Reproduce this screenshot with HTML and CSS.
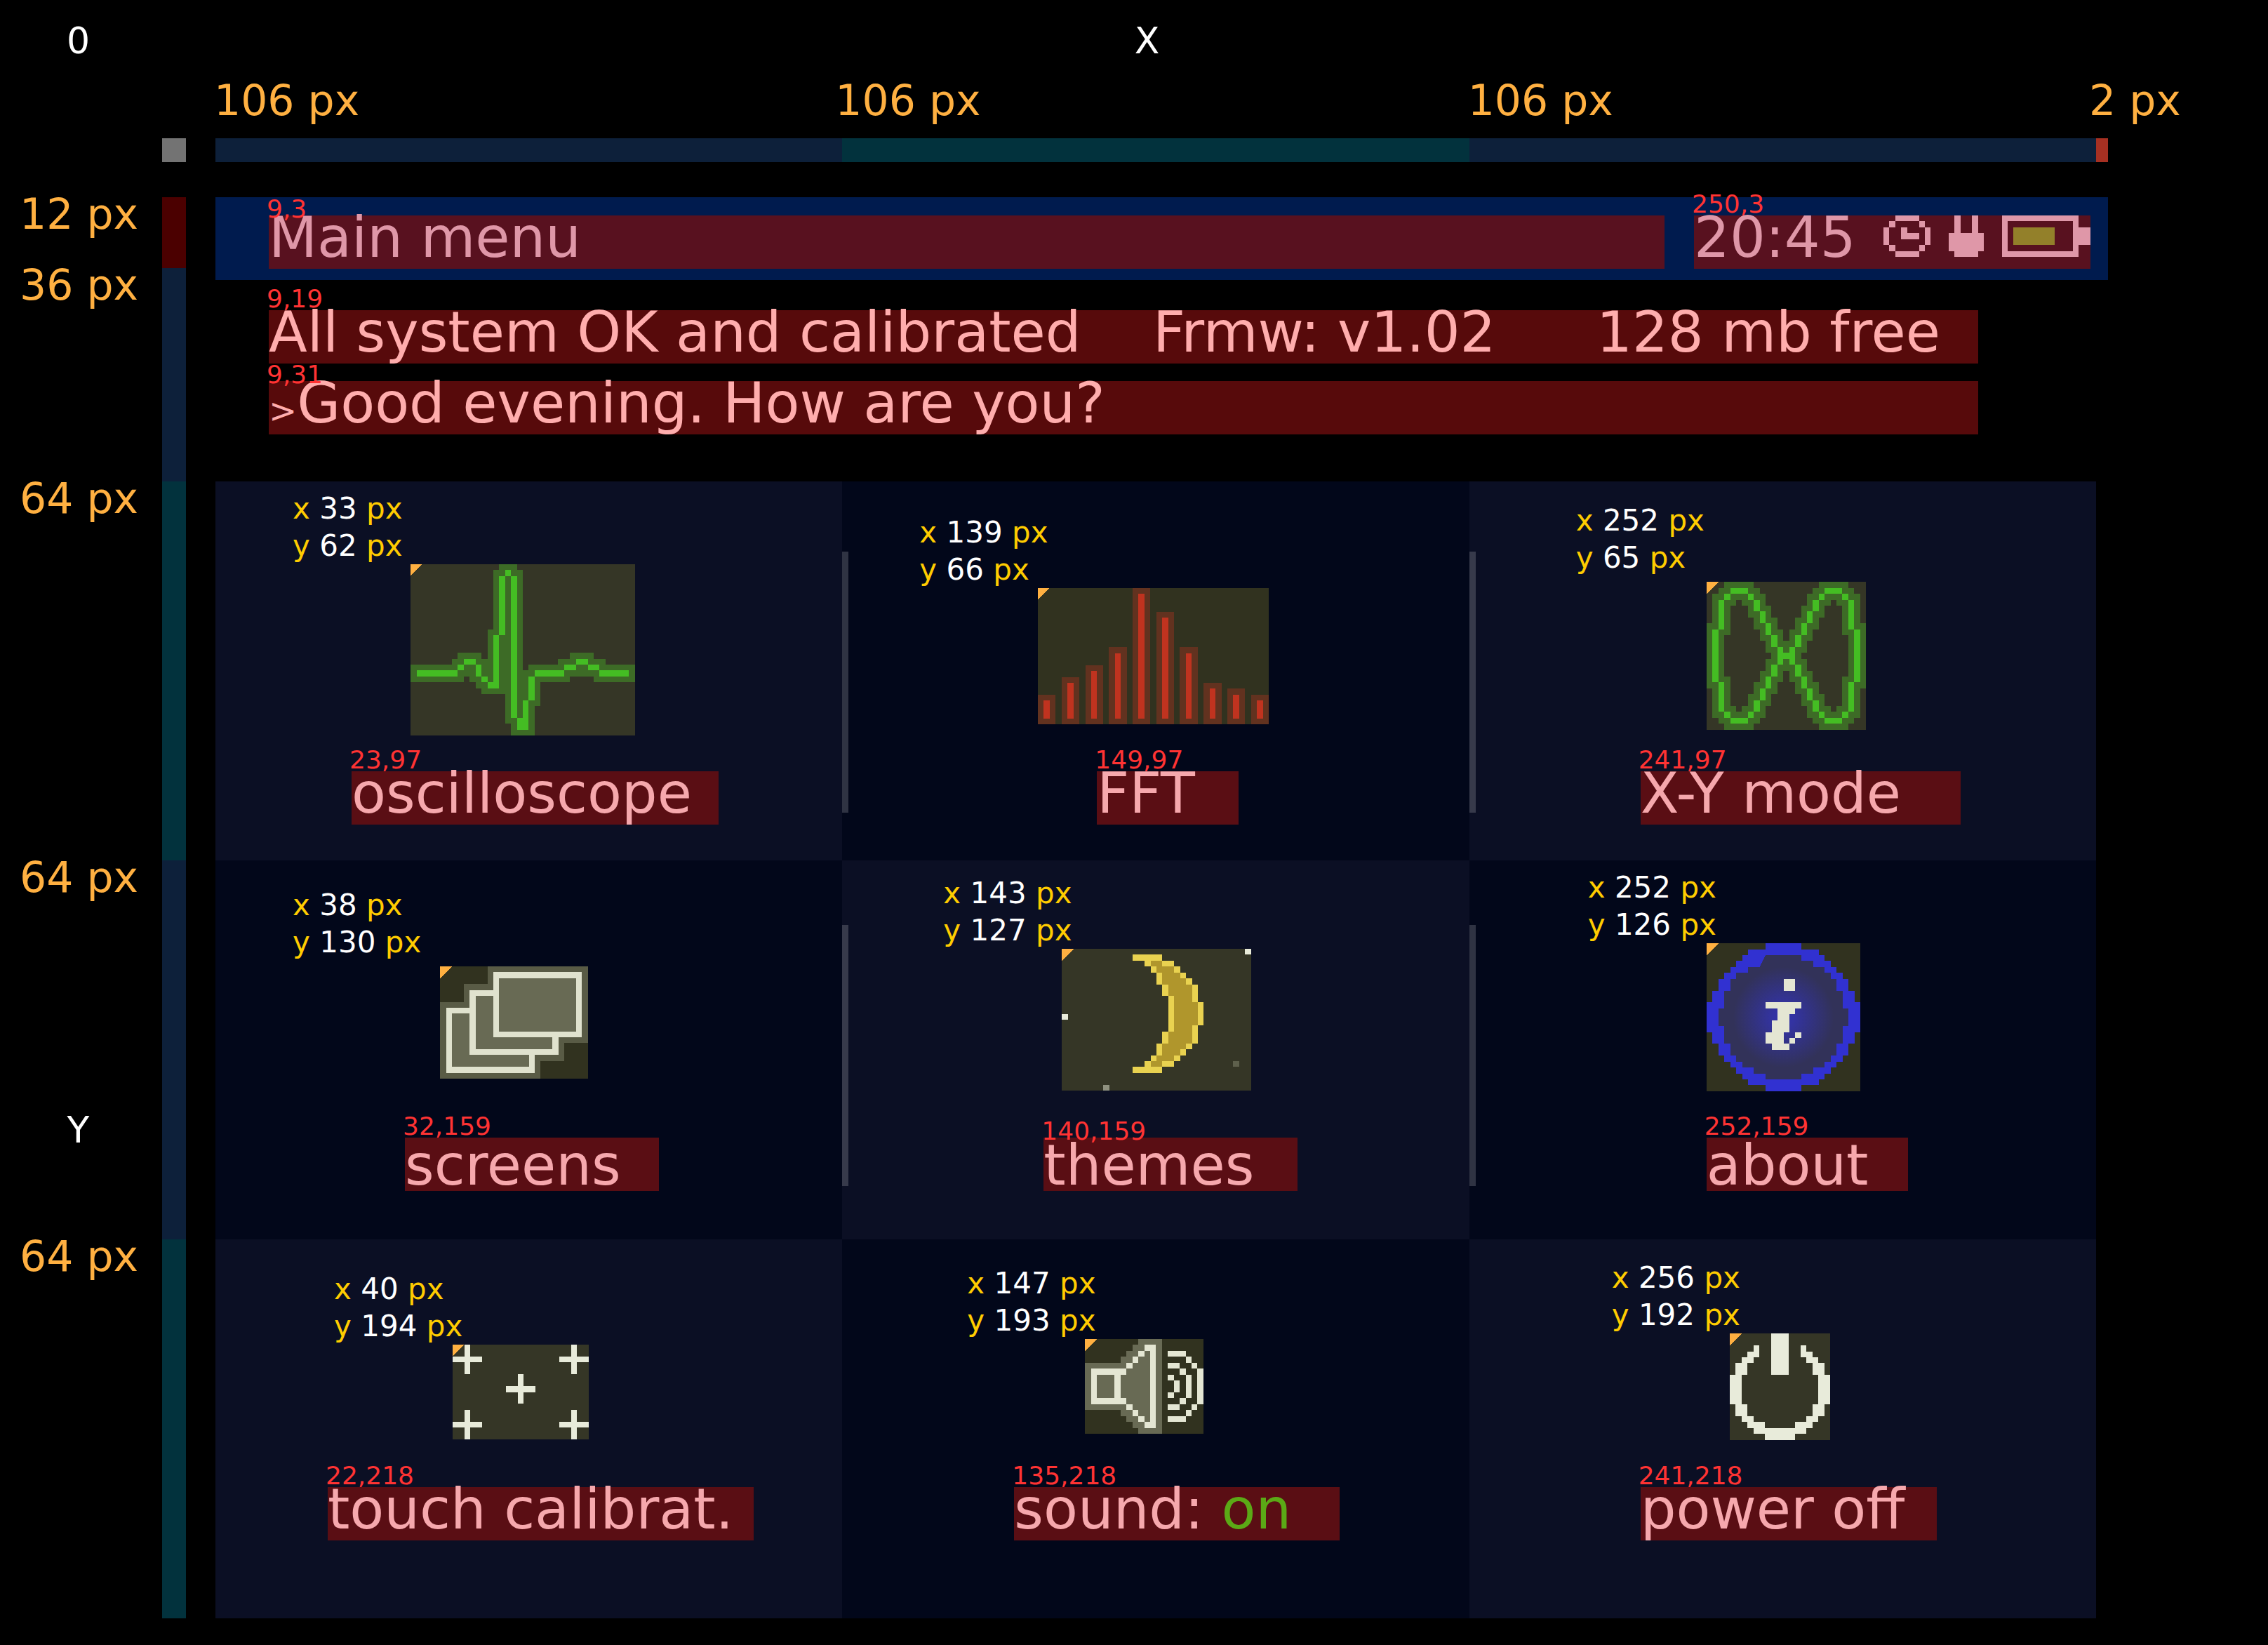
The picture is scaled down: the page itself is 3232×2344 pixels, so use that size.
FILE: index.html
```html
<!DOCTYPE html>
<html lang="en">
<head>
<meta charset="utf-8">
<title>Main menu layout</title>
<link rel="stylesheet" href="styles.css">
</head>
<body>
<header class="scale">
  <div class="scale-row">
    <span class="axis">0</span>
    <span class="axis axis-x">X</span>
  </div>
  <div class="scale-row scale-names">
    <div class="scale-cols">
      <span class="size">106 px</span>
      <span class="size size-in">106 px</span>
      <span class="size">106 px</span>
      <span class="size size-in">2 px</span>
    </div>
  </div>
  <div class="scale-row scale-bars">
    <span class="origin"></span>
    <div class="scale-cols">
      <span class="navy"></span><span class="teal"></span><span class="navy"></span><span class="red"></span>
    </div>
  </div>
</header>

<div class="board">
  <aside class="rows">
    <div class="row row-bar"><span class="row-name size">12 px</span><span class="row-mark maroon"></span></div>
    <div class="row row-info"><span class="row-name size">36 px</span><span class="row-mark navy"></span></div>
    <div class="row"><span class="row-name size">64 px</span><span class="row-mark teal"></span></div>
    <div class="row"><div class="row-side"><span class="row-name size">64 px</span><span class="axis axis-y">Y</span></div><span class="row-mark navy"></span></div>
    <div class="row"><span class="row-name size">64 px</span><span class="row-mark teal"></span></div>
  </aside>

  <main class="screen">
    <header class="titlebar">
      <div class="spot spot-title"><span class="tag tag-low">9,3</span><h1 class="chip">Main menu</h1></div>
      <div class="spot spot-status"><span class="tag">250,3</span>
        <div class="chip chip-status"><span>20:45</span>
          <svg class="status-icons" viewBox="32 0 35 7" width="295" height="59" aria-hidden="true">
            <path fill="#df97a8" d="M34 0h4v1h-4zM33 1h1v1h-1zM38 1h1v1h-1zM32 2h1v3h-1zM39 2h1v3h-1zM33 5h1v1h-1zM38 5h1v1h-1zM34 6h4v1h-4zM35 2h1v1h2v1h-3zM44 0h1v3h2v-3h1v3h1v3h-1v1h-4v-1h-1v-3h1zM52 0h13v2h2v3h-2v2h-13zM53 1v5h11v-5z" fill-rule="evenodd"/>
            <path fill="#93802a" d="M54 2h7v3h-7z"/>
          </svg>
        </div>
      </div>
    </header>

    <section class="messages">
      <div class="spot"><span class="tag">9,19</span><p class="chip chip-line chip-cols"><span>All system OK and calibrated</span><span>Frmw: v1.02</span><span>128 mb free</span></p></div>
      <div class="spot"><span class="tag tag-low">9,31</span><p class="chip chip-line"><span class="prompt">&gt;</span>Good evening. How are you?</p></div>
    </section>

    <nav class="tiles">
      <section class="tile tile-scope light">
        <p class="readout">x <b>33</b> px<br>y <b>62</b> px</p>
        <svg class="icon" viewBox="0 0 38 29" width="320" height="244" aria-hidden="true">
          <defs>
            <path id="trace" d="M1 18h7v1h-7zM8 17h1v1h-1zM9 16h2v1h-2zM11 17h1v2h-1zM12 19h1v1h-1zM13 20h2v1h-2zM14 12h1v9h-1zM15 2h1v10h-1zM16 1h1v1h-1zM17 2h1v24h-1zM18 26h2v2h-2zM19 23h1v5h-1zM20 19h1v4h-1zM21 18h5v1h-5zM26 17h2v1h-2zM28 16h2v1h-2zM30 17h2v1h-2zM32 18h5v1h-5z"/>
          </defs>
          <path fill="#353626" d="M0 0h38v29h-38z"/>
          <use href="#trace" fill="#3d6b26" stroke="#3d6b26" stroke-width="2"/>
          <use href="#trace" fill="#44bd23"/>
          <path fill="#ffb041" d="M0 0h2l-2 2z"/>
        </svg>
        <div class="spot"><span class="tag">23,97</span><a class="chip" href="#oscilloscope">oscilloscope</a></div>
      </section>

      <section class="tile tile-fft dark split">
        <p class="readout">x <b>139</b> px<br>y <b>66</b> px</p>
        <svg class="icon" viewBox="0 0 39 23" width="329" height="194" aria-hidden="true">
          <path fill="#31321f" d="M0 0h39v23h-39z"/>
          <path fill="#62321f" d="M0 18h3v5h-3zM4 15h3v8h-3zM8 13h3v10h-3zM12 10h3v13h-3zM16 0h3v23h-3zM20 4h3v19h-3zM24 10h3v13h-3zM28 16h3v7h-3zM32 17h3v6h-3zM36 18h3v5h-3z"/>
          <path fill="#c0331f" d="M1 19h1v3h-1zM5 16h1v6h-1zM9 14h1v8h-1zM13 11h1v11h-1zM17 1h1v21h-1zM21 5h1v17h-1zM25 11h1v11h-1zM29 17h1v5h-1zM33 18h1v4h-1zM37 19h1v3h-1z"/>
          <path fill="#ffb041" d="M0 0h2l-2 2z"/>
        </svg>
        <div class="spot"><span class="tag">149,97</span><a class="chip" href="#fft">FFT</a></div>
      </section>

      <section class="tile tile-xy light split">
        <p class="readout readout-gap">x <b>252</b> px<br>y <b>65</b> px</p>
        <svg class="icon" viewBox="0 0 27 25" width="227" height="211" aria-hidden="true">
          <defs>
            <path id="lobe" d="M4 1h3v1h-3zM3 2h1v1h-1zM7 2h1v1h-1zM2 3h1v5h-1zM8 3h1v2h-1zM9 5h1v2h-1zM10 7h1v2h-1zM11 9h1v2h-1zM12 11h1v3h-1zM13 12h1v1h-1zM1 8h1v9h-1zM11 14h1v2h-1zM10 16h1v2h-1zM9 18h1v2h-1zM8 20h1v2h-1zM2 17h1v5h-1zM3 22h1v1h-1zM7 22h1v1h-1zM4 23h3v1h-3z"/>
          </defs>
          <path fill="#353626" d="M0 0h27v25h-27z"/>
          <g fill="#3d6b26" stroke="#3d6b26" stroke-width="2"><use href="#lobe"/><use href="#lobe" transform="matrix(-1 0 0 1 27 0)"/></g>
          <g fill="#44bd23"><use href="#lobe"/><use href="#lobe" transform="matrix(-1 0 0 1 27 0)"/></g>
          <path fill="#ffb041" d="M0 0h2l-2 2z"/>
        </svg>
        <div class="spot"><span class="tag">241,97</span><a class="chip" href="#xy-mode">X-Y mode</a></div>
      </section>

      <section class="tile tile-screens dark">
        <p class="readout readout-gap">x <b>38</b> px<br>y <b>130</b> px</p>
        <svg class="icon" viewBox="0 0 25 19" width="211" height="160" aria-hidden="true">
          <path fill="#31321f" d="M0 0h25v19h-25z"/>
          <path fill="#595b45" d="M8 0h17v13h-4v3h-4v3h-17v-13h4v-3h4z"/>
          <path fill="#e0e2ce" d="M1 7h15v11h-15z"/><path fill="#686a54" d="M2 8h13v9h-13z"/>
          <path fill="#e0e2ce" d="M5 4h15v11h-15z"/><path fill="#686a54" d="M6 5h13v9h-13z"/>
          <path fill="#e0e2ce" d="M9 1h15v11h-15z"/><path fill="#686a54" d="M10 2h13v9h-13z"/>
          <path fill="#ffb041" d="M0 0h2l-2 2z"/>
        </svg>
        <div class="spot"><span class="tag">32,159</span><a class="chip" href="#screens">screens</a></div>
      </section>

      <section class="tile tile-themes light split">
        <p class="readout">x <b>143</b> px<br>y <b>127</b> px</p>
        <svg class="icon" viewBox="0 0 32 24" width="270" height="202" aria-hidden="true">
          <path fill="#353626" d="M0 0h32v24h-32z"/>
          <path fill="#b0962c" d="M15 2h2v1h-2zM16 3h3v1h-3zM17 4h3v1h-3zM17 5h4v1h-4zM18 6h4v2h-4zM19 8h3v1h-3zM19 9h4v4h-4zM19 13h3v1h-3zM18 14h4v2h-4zM17 16h4v1h-4zM17 17h3v1h-3zM16 18h3v1h-3zM15 19h2v1h-2z"/>
          <path fill="#e9d250" d="M12 1h5v1h2v1h-2v-1h-2v1h-1v-1h-2zM15 3h1v1h-1zM19 3h1v1h-1zM16 4h1v2h-1zM20 4h1v1h-1zM21 5h1v1h-1zM22 6h1v3h-1zM17 6h1v2h-1zM18 8h1v6h-1zM23 9h1v4h-1zM22 13h1v3h-1zM17 14h1v2h-1zM16 16h1v2h-1zM21 16h1v1h-1zM20 17h1v1h-1zM19 18h1v1h-1zM15 18h1v1h-1zM17 19h2v1h-2zM14 19h1v1h-1zM12 20h5v1h-5z"/>
          <path fill="#e9ebda" d="M31 0h1v1h-1zM0 11h1v1h-1z"/>
          <path fill="#8f917f" d="M7 23h1v1h-1z"/>
          <path fill="#5e604c" d="M29 19h1v1h-1z"/>
          <path fill="#ffb041" d="M0 0h2l-2 2z"/>
        </svg>
        <div class="spot"><span class="tag tag-low">140,159</span><a class="chip" href="#themes">themes</a></div>
      </section>

      <section class="tile tile-about dark split">
        <p class="readout">x <b>252</b> px<br>y <b>126</b> px</p>
        <svg class="icon" viewBox="0 0 26 25" width="219" height="211" aria-hidden="true">
          <defs>
            <radialGradient id="glow" gradientUnits="userSpaceOnUse" cx="13" cy="12.5" r="8.5">
              <stop offset="0" stop-color="#3333a8"/><stop offset="0.2" stop-color="#3333a2"/><stop offset="1" stop-color="#323259"/>
            </radialGradient>
          </defs>
          <path fill="#31321f" d="M0 0h26v25h-26z"/>
          <path fill="#3131d1" d="M10 0h6v1h3v1h1v1h1v1h1v1h1v1h1v2h1v2h1v5h-1v2h-1v2h-1v1h-1v1h-1v1h-1v1h-1v1h-3v1h-6v-1h-3v-1h-1v-1h-1v-1h-1v-1h-1v-1h-1v-2h-1v-2h-1v-5h1v-2h1v-2h1v-1h1v-1h1v-1h1v-1h1v-1h3z"/>
          <path fill="url(#glow)" d="M10 2h6v1h2v1h2v1h1v1h1v2h1v3h1v3h-1v3h-1v2h-1v1h-1v1h-2v1h-2v1h-6v-1h-2v-1h-2v-1h-1v-1h-1v-2h-1v-3h-1v-3h1v-3h1v-2h1v-1h2v-1h2z"/>
          <path fill="#e4e6d3" d="M13 6h2v2h-2zM10 10h6v1h-1v1h-1v3h-1v2h1v1h-3v-1h-1v-2h1v-2h1v-2h-2zM15 15h1v1h-1zM14 16h1v1h-1z"/>
          <path fill="#ffb041" d="M0 0h2l-2 2z"/>
        </svg>
        <div class="spot"><span class="tag">252,159</span><a class="chip" href="#about">about</a></div>
      </section>

      <section class="tile tile-touch light">
        <p class="readout">x <b>40</b> px<br>y <b>194</b> px</p>
        <svg class="icon" viewBox="0 0 23 16" width="194" height="135" aria-hidden="true">
          <path fill="#353626" d="M0 0h23v16h-23z"/>
          <path fill="#ffb041" d="M0 0h2l-2 2z"/>
          <path fill="#e8ebda" d="M2 0h1v2h2v1h-2v2h-1v-2h-2v-1h2zM20 0h1v2h2v1h-2v2h-1v-2h-2v-1h2zM11 5h1v2h2v1h-2v2h-1v-2h-2v-1h2zM2 11h1v2h2v1h-2v2h-1v-2h-2v-1h2zM20 11h1v2h2v1h-2v2h-1v-2h-2v-1h2z"/>
        </svg>
        <div class="spot"><span class="tag">22,218</span><a class="chip" href="#touch">touch calibrat.</a></div>
      </section>

      <section class="tile tile-sound dark">
        <p class="readout">x <b>147</b> px<br>y <b>193</b> px</p>
        <svg class="icon" viewBox="0 0 20 16" width="169" height="135" aria-hidden="true">
          <path fill="#31321f" d="M0 0h20v16h-20z"/>
          <path fill="#686a54" d="M0 4h6v-1h1v-1h1v-1h1v-1h4v16h-4v-1h-1v-1h-1v-1h-1v-1h-6z"/>
          <path fill="#e4e6d3" fill-rule="evenodd" d="M1 5h5v6h-5zM2 6v4h3v-4zM6 5h1v1h-1zM6 10h1v1h-1zM7 4h1v1h-1zM7 11h1v1h-1zM8 3h1v1h-1zM8 12h1v1h-1zM9 2h1v1h-1zM9 13h1v1h-1zM10 1h2v14h-2v-1h1v-12h-1zM14 2h3v1h-3zM14 13h3v1h-3zM17 3h1v1h-1zM17 12h1v1h-1zM18 4h1v1h-1zM18 11h1v1h-1zM19 5h1v6h-1zM14 4h2v1h-2zM14 11h2v1h-2zM16 5h1v1h-1zM16 10h1v1h-1zM17 6h1v4h-1zM14 6h1v1h-1zM14 9h1v1h-1zM15 7h1v2h-1z"/>
          <path fill="#ffb041" d="M0 0h2l-2 2z"/>
        </svg>
        <div class="spot"><span class="tag">135,218</span><a class="chip" href="#sound">sound: <span class="on">on</span></a></div>
      </section>

      <section class="tile tile-power light">
        <p class="readout">x <b>256</b> px<br>y <b>192</b> px</p>
        <svg class="icon" viewBox="0 0 17 18" width="143" height="152" aria-hidden="true">
          <path fill="#353626" d="M0 0h17v18h-17z"/>
          <path fill="#e8ebda" d="M7 0h3v7h-3zM4 2h1v2h-1v1h-1v2h-1v5h1v2h1v1h2v1h5v-1h2v-1h1v-2h1v-5h-1v-2h-1v-1h-1v-2h1v1h1v1h1v1h1v2h1v5h-1v2h-1v1h-1v1h-1v1h-2v1h-5v-1h-2v-1h-1v-1h-1v-1h-1v-2h-1v-5h1v-2h1v-1h1v-1h1z"/>
          <path fill="#ffb041" d="M0 0h2l-2 2z"/>
        </svg>
        <div class="spot"><span class="tag">241,218</span><a class="chip" href="#power">power off</a></div>
      </section>
    </nav>
  </main>
</div>
</body>
</html>
```

FILE: styles.css
```css
* {
  box-sizing: border-box;
}

body {
  margin: 0;
  padding: 28px 228px 36px 0;
  background: #000;
  color: #fff;
  font-family: "DejaVu Sans", sans-serif;
}

h1,
p {
  margin: 0;
  font-weight: normal;
}

/* Measuring scale along the top */
.scale-row {
  display: grid;
  grid-template-columns: 231px 34px 42px minmax(0, 1fr);
}

.scale-names {
  margin-top: 31px;
}

.scale-bars {
  margin: 30px 0 50px;
  height: 34px;
}

.scale-cols {
  grid-column: 4;
  display: grid;
  grid-template-columns: repeat(3, minmax(0, 1fr)) 17px;
}

.axis {
  padding-right: 8px;
  font-size: 52px;
  line-height: 60px;
  text-align: center;
}

.axis-x {
  grid-column: 3 / 5;
  padding-right: 0;
}

.size {
  margin-left: -2px;
  color: #ffb041;
  font-size: 60px;
  line-height: 48px;
  white-space: nowrap;
}

.size-in {
  margin-left: -10px;
}

.origin {
  grid-column: 2;
  background: #737373;
}

.navy { background: #0d203a; }
.teal { background: #02323d; }
.red { background: #a63022; }
.maroon { background: #4b0000; }

/* Row sizes down the left */
.board {
  display: flex;
  gap: 42px;
}

.rows {
  flex: 0 0 265px;
}

.row {
  display: grid;
  grid-template-columns: 231px 34px;
  height: 540px;
}

.row-bar { height: 101px; }
.row-info { height: 304px; }

.row-name {
  margin-left: 0;
  padding-right: 34px;
  text-align: right;
}

.row-side {
  display: flex;
  flex-direction: column;
  justify-content: space-between;
  padding-bottom: 126px;
}

/* Labelled text areas */
.spot {
  position: relative;
}

.tag {
  position: absolute;
  z-index: 1;
  left: -3px;
  bottom: 100%;
  color: #f33;
  font-size: 36px;
  line-height: 33px;
  white-space: nowrap;
}

.tag-low {
  bottom: calc(100% - 7px);
}

.chip {
  display: block;
  height: 76px;
  background: #5a0e14;
  color: #f6a8ad;
  font-size: 80px;
  line-height: 64px;
  text-decoration: none;
  white-space: nowrap;
}

.on {
  color: #5ba916;
}

.screen {
  flex: 1;
  min-width: 0;
}

.titlebar {
  display: flex;
  gap: 42px;
  padding: 26px 25px 16px 76px;
  background: #001b4e;
}

.titlebar .chip {
  background: #58111f;
  color: #df97a8;
}

.spot-title {
  flex: 1;
}

.spot-status {
  flex: 0 0 565px;
}

.chip-status {
  display: flex;
  justify-content: space-between;
}

.messages {
  display: flex;
  flex-direction: column;
  gap: 25px;
  padding: 43px 185px 67px 76px;
}

.messages .chip {
  background: #570a0b;
  color: #ffadad;
}

.chip-cols {
  display: grid;
  grid-template-columns: 1260px 632px auto;
}

.prompt {
  font-size: 48px;
}

/* Menu tiles */
.tiles {
  display: grid;
  grid-template-columns: repeat(3, minmax(0, 1fr));
  padding-right: 17px;
}

.tile {
  position: relative;
  display: flex;
  flex-direction: column;
  align-items: flex-start;
  height: 540px;
}

.light { background: #0b0f24; }
.dark { background: #02071a; }

.split::before {
  content: "";
  position: absolute;
  left: 0;
  top: 92px;
  width: 9px;
  height: 372px;
  background: rgba(255, 255, 255, 0.18);
}

.tile-fft::before,
.tile-xy::before {
  top: 100px;
}

.readout {
  color: #fc0;
  font-size: 42px;
  line-height: 53px;
  white-space: nowrap;
}

.readout b {
  color: #fff;
  font-weight: normal;
}

.readout-gap {
  margin-bottom: 8px;
}

.icon {
  display: block;
  flex: none;
  shape-rendering: crispEdges;
}

.status-icons {
  shape-rendering: crispEdges;
}

.tile .spot {
  margin-top: auto;
}

.tile-scope { padding: 12px 0 51px; }
.tile-scope .readout { margin-left: 110px; }
.tile-scope .icon { margin-left: 278px; }
.tile-scope .spot { margin-left: 194px; width: 523px; }

.tile-fft { padding: 46px 0 51px; }
.tile-fft .readout { margin-left: 110px; }
.tile-fft .icon { margin-left: 279px; }
.tile-fft .spot { margin-left: 363px; width: 202px; }

.tile-xy { padding: 29px 0 51px; }
.tile-xy .readout { margin-left: 152px; }
.tile-xy .icon { margin-left: 338px; }
.tile-xy .spot { margin-left: 244px; width: 456px; }

.tile-screens { padding: 37px 0 69px; }
.tile-screens .readout { margin-left: 110px; }
.tile-screens .icon { margin-left: 320px; }
.tile-screens .spot { margin-left: 270px; width: 362px; }

.tile-themes { padding: 20px 0 69px; }
.tile-themes .readout { margin-left: 144px; }
.tile-themes .icon { margin-left: 313px; }
.tile-themes .spot { margin-left: 287px; width: 362px; }

.tile-about { padding: 12px 0 69px; }
.tile-about .readout { margin-left: 169px; }
.tile-about .icon { margin-left: 338px; }
.tile-about .spot { margin-left: 338px; width: 287px; }

.tile-screens .chip,
.tile-themes .chip,
.tile-about .chip {
  padding-top: 8px;
}

.tile-touch { padding: 44px 0 111px; }
.tile-touch .readout { margin-left: 169px; }
.tile-touch .icon { margin-left: 338px; }
.tile-touch .spot { margin-left: 160px; width: 607px; }

.tile-sound { padding: 36px 0 111px; }
.tile-sound .readout { margin-left: 178px; }
.tile-sound .icon { margin-left: 346px; }
.tile-sound .spot { margin-left: 245px; width: 464px; }

.tile-power { padding: 28px 0 111px; }
.tile-power .readout { margin-left: 203px; }
.tile-power .icon { margin-left: 371px; }
.tile-power .spot { margin-left: 244px; width: 422px; }
```
